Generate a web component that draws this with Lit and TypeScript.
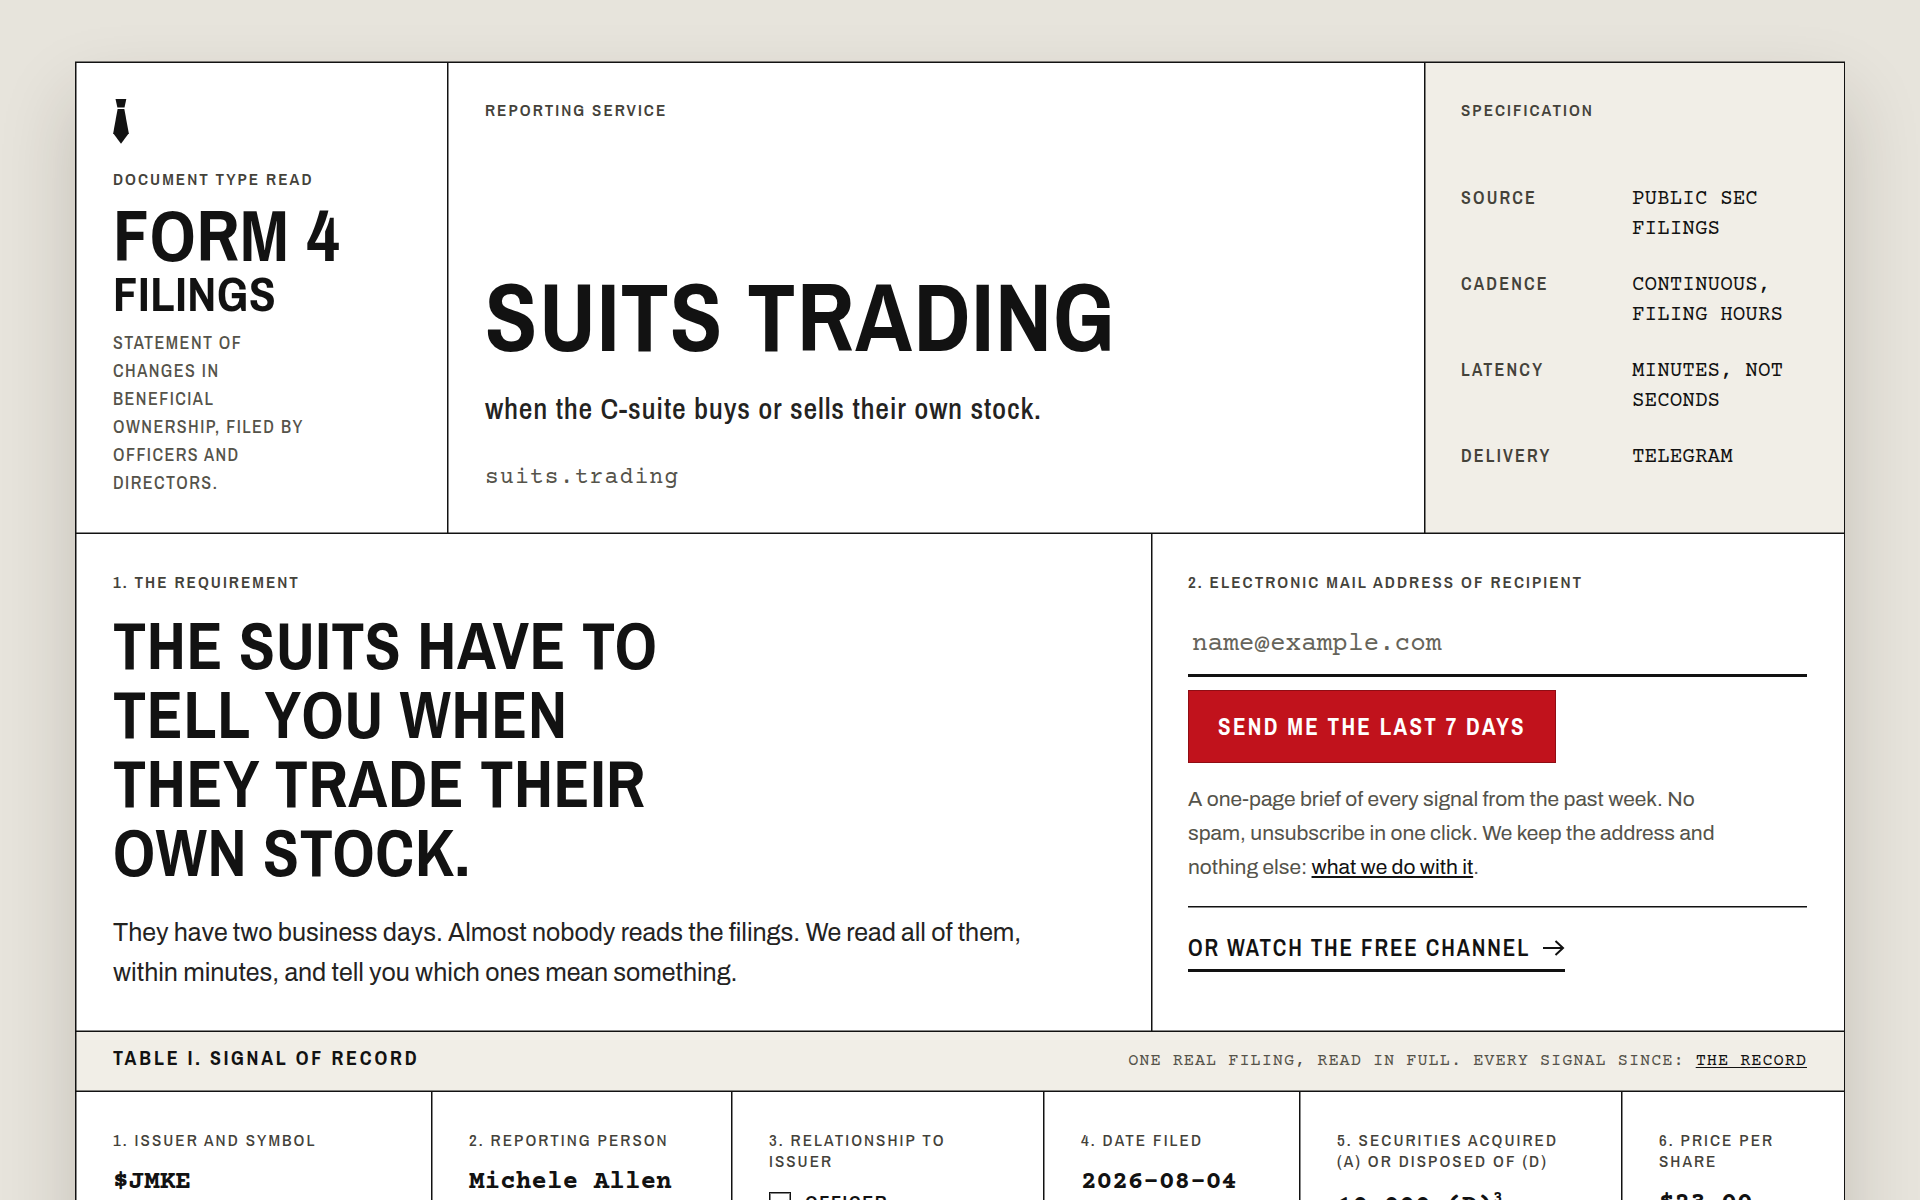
import { LitElement, html, css } from "lit";
import { customElement } from "lit/decorators.js";

const SPEC: [string, string][] = [
  ["Source", "Public SEC filings"],
  ["Cadence", "Continuous, filing hours"],
  ["Latency", "Minutes, not seconds"],
  ["Delivery", "Telegram"],
];

@customElement("app-root")
export class AppRoot extends LitElement {
  static styles = css`
    :host {
      --ink: #121212;
      --ink-2: #24231f;
      --ink-3: #44423a;
      --ink-4: #55534a;
      --hairline: rgba(18, 18, 18, 0.5);
      --paper: #ffffff;
      --tint: #f1eee7;
      --narrow: "Archivo Narrow", "Liberation Sans", sans-serif;
      --sans: "Archivo", "Liberation Sans", sans-serif;
      --mono: "Courier Prime", "Liberation Mono", monospace;
      display: block;
      height: 100vh;
      overflow: hidden;
      background: #e7e4dc;
      color: var(--ink);
      font-family: var(--sans);
    }
    * { box-sizing: border-box; }
    h1, h2, h3, p, dl, dd { margin: 0; }
    a { color: var(--ink); }

    .sheet {
      margin: 62px 75px 0;
      border: 1px solid var(--ink);
      background: var(--paper);
      box-shadow: 0 -1px 0 var(--hairline), 0 36px 70px rgba(40, 34, 20, 0.19);
    }
    .row { display: grid; border-bottom: 1px solid var(--ink); }
    .masthead { grid-template-columns: 372fr 977fr 419fr; }
    .ask { grid-template-columns: 1076fr 692fr; }
    .cell {
      min-width: 0;
      padding: 36px 36px 36px 37px;
      border-right: 1px solid var(--ink);
      box-shadow: inset 1px 0 0 var(--hairline), inset 0 -1px 0 var(--hairline);
    }
    .cell:last-child { border-right: 0; }
    .ask .cell { padding-top: 37px; padding-bottom: 38px; }
    .row .cell:last-child { padding-left: 36px; padding-right: 37px; }
    .label {
      display: block;
      font: 600 17px/22px var(--narrow);
      letter-spacing: 0.12em;
      text-transform: uppercase;
      color: var(--ink-3);
    }

    .tie { display: block; width: 16px; height: 45px; margin-bottom: 24px; fill: var(--ink); }
    .form-no {
      margin-top: 11px;
      font: 700 72px/68px var(--narrow);
      letter-spacing: 0.01em;
      text-transform: uppercase;
    }
    .form-no small { display: block; font-size: 49px; line-height: 48px; }
    .statement {
      max-width: 200px;
      margin-top: 12px;
      font: 500 18px/28px var(--narrow);
      letter-spacing: 0.08em;
      text-transform: uppercase;
      color: var(--ink-4);
    }

    .title { display: flex; flex-direction: column; justify-content: space-between; }
    .name { font: 700 96px/96px var(--narrow); letter-spacing: 0.015em; text-transform: uppercase; }
    .tagline {
      margin-top: 23px;
      font: 500 30px/40px var(--narrow);
      letter-spacing: 0.025em;
      color: var(--ink-2);
    }
    .domain { margin-top: 31px; font: 400 23px/38px var(--mono); letter-spacing: 0.05em; color: var(--ink-4); }

    .spec { background: var(--tint); }
    .spec dl {
      display: grid;
      grid-template-columns: 171fr 175fr;
      align-items: baseline;
      row-gap: 24px;
      margin-top: 62px;
    }
    .spec dt { font: 600 18px/30px var(--narrow); letter-spacing: 0.12em; text-transform: uppercase; color: var(--ink-3); }
    .spec dd { font: 400 21px/30px var(--mono); text-transform: uppercase; }

    .headline {
      max-width: 600px;
      margin-top: 18px;
      font: 700 66px/69px var(--narrow);
      letter-spacing: 0.01em;
      text-transform: uppercase;
    }
    .lede { max-width: 940px; margin-top: 26px; font-size: 25px; line-height: 40px; color: var(--ink-2); }

    .signup { display: flex; flex-direction: column; align-items: flex-start; }
    .email {
      width: 100%;
      margin-top: 21px;
      padding: 15px 4px 13px;
      border: 0;
      border-bottom: 3px solid var(--ink);
      border-radius: 0;
      outline: 0;
      background: none;
      font: 400 26px/32px var(--mono);
      color: var(--ink);
    }
    .email::placeholder { color: #66645a; opacity: 1; }
    .send {
      margin-top: 13px;
      padding: 20px 29px;
      border: 1px solid #8f0d14;
      background: #c1121c;
      font: 700 23px/31px var(--narrow);
      letter-spacing: 0.1em;
      text-transform: uppercase;
      color: #ffffff;
    }
    .note { max-width: 560px; margin-top: 19px; font-size: 21px; line-height: 34px; color: var(--ink-4); }
    .channel {
      width: 100%;
      margin-top: 22px;
      padding-top: 24px;
      border-top: 1px solid var(--ink);
      box-shadow: inset 0 1px 0 var(--hairline);
    }
    .channel a {
      display: inline-flex;
      align-items: center;
      gap: 12px;
      padding-bottom: 4px;
      border-bottom: 3px solid var(--ink);
      font: 600 23px/34px var(--narrow);
      letter-spacing: 0.08em;
      text-transform: uppercase;
      text-decoration: none;
    }
    .arrow { width: 23px; height: 18px; fill: none; stroke: var(--ink); stroke-width: 2; }

    .strip {
      display: flex;
      justify-content: space-between;
      align-items: baseline;
      padding: 12px 37px 15px;
      border-bottom: 1px solid var(--ink);
      background: var(--tint);
      box-shadow: inset 1px 0 0 var(--hairline), inset 0 -1px 0 var(--hairline);
    }
    .strip h3 { font: 700 20px/28px var(--narrow); letter-spacing: 0.14em; text-transform: uppercase; }
    .strip p { font: 400 17px/28px var(--mono); letter-spacing: 0.055em; text-transform: uppercase; color: var(--ink-4); }
    .strip a, .note a { text-underline-offset: 2px; }

    .record { display: grid; grid-template-columns: 356fr 300fr 312fr 256fr 322fr 222fr; }
    .record .cell { padding-top: 37px; }
    .record .label { font-weight: 500; line-height: 21px; }
    .value { margin-top: 17px; font: 700 26px/32px var(--mono); }
    .value sup { font-size: 16px; line-height: 20px; }
    .role {
      display: flex;
      align-items: center;
      gap: 14px;
      margin-top: 16px;
      font: 600 20px/32px var(--narrow);
      letter-spacing: 0.08em;
      text-transform: uppercase;
    }
    .role input {
      appearance: none;
      display: grid;
      place-items: center;
      width: 22px;
      height: 22px;
      margin: 0;
      border: 1px solid var(--ink);
      box-shadow: inset 0 0 0 1px var(--hairline);
    }
    .role input:checked::before {
      content: "";
      width: 7px;
      height: 12px;
      border: solid var(--ink);
      border-width: 0 2px 2px 0;
      transform: rotate(45deg);
    }
  `;

  render() {
    return html`
      <main class="sheet">
        <header class="row masthead">
          <div class="cell">
            <svg class="tie" viewBox="0 0 16 45" aria-hidden="true">
              <path d="M2.5 0H13.3L11.5 8.6H4.4Z" />
              <path d="M4.6 10H11.3L15.8 34.2 8 44.8 0.2 34.2Z" />
            </svg>
            <span class="label">Document type read</span>
            <p class="form-no">Form 4<small>Filings</small></p>
            <p class="statement">Statement of changes in beneficial ownership, filed by officers and directors.</p>
          </div>
          <div class="cell title">
            <span class="label">Reporting service</span>
            <div>
              <h1 class="name">Suits Trading</h1>
              <p class="tagline">when the C-suite buys or sells their own stock.</p>
              <p class="domain">suits.trading</p>
            </div>
          </div>
          <div class="cell spec">
            <span class="label">Specification</span>
            <dl>
              ${SPEC.map(([k, v]) => html`<dt>${k}</dt><dd>${v}</dd>`)}
            </dl>
          </div>
        </header>

        <section class="row ask">
          <div class="cell">
            <span class="label">1. The requirement</span>
            <h2 class="headline">The suits have to tell you when they trade their own stock.</h2>
            <p class="lede">
              They have two business days. Almost nobody reads the filings. We read all of them, within minutes, and
              tell you which ones mean something.
            </p>
          </div>
          <form class="cell signup" @submit=${(e: Event) => e.preventDefault()}>
            <label class="label" for="email">2. Electronic mail address of recipient</label>
            <input class="email" id="email" type="email" placeholder="name@example.com" />
            <button class="send" type="submit">Send me the last 7 days</button>
            <p class="note">
              A one-page brief of every signal from the past week. No spam, unsubscribe in one click. We keep the
              address and nothing else: <a href="#privacy">what we do with it</a>.
            </p>
            <div class="channel">
              <a href="#channel">Or watch the free channel<svg class="arrow" viewBox="0 0 23 18" aria-hidden="true"><path d="M1 9H21M13.5 2L21 9L13.5 16" /></svg></a>
            </div>
          </form>
        </section>

        <section>
          <div class="strip">
            <h3>Table I. Signal of record</h3>
            <p>One real filing, read in full. Every signal since: <a href="#record">The record</a></p>
          </div>
          <dl class="record">
            <div class="cell"><dt class="label">1. Issuer and symbol</dt><dd class="value">$JMKE</dd></div>
            <div class="cell"><dt class="label">2. Reporting person</dt><dd class="value">Michele Allen</dd></div>
            <div class="cell">
              <dt class="label">3. Relationship to issuer</dt>
              <dd><label class="role"><input type="checkbox" checked />Officer</label></dd>
            </div>
            <div class="cell"><dt class="label">4. Date filed</dt><dd class="value">2026-08-04</dd></div>
            <div class="cell">
              <dt class="label">5. Securities acquired (A) or disposed of (D)</dt>
              <dd class="value">10,000 (D)<sup>3</sup></dd>
            </div>
            <div class="cell"><dt class="label">6. Price per share</dt><dd class="value">$23.00</dd></div>
          </dl>
        </section>
      </main>
    `;
  }
}
